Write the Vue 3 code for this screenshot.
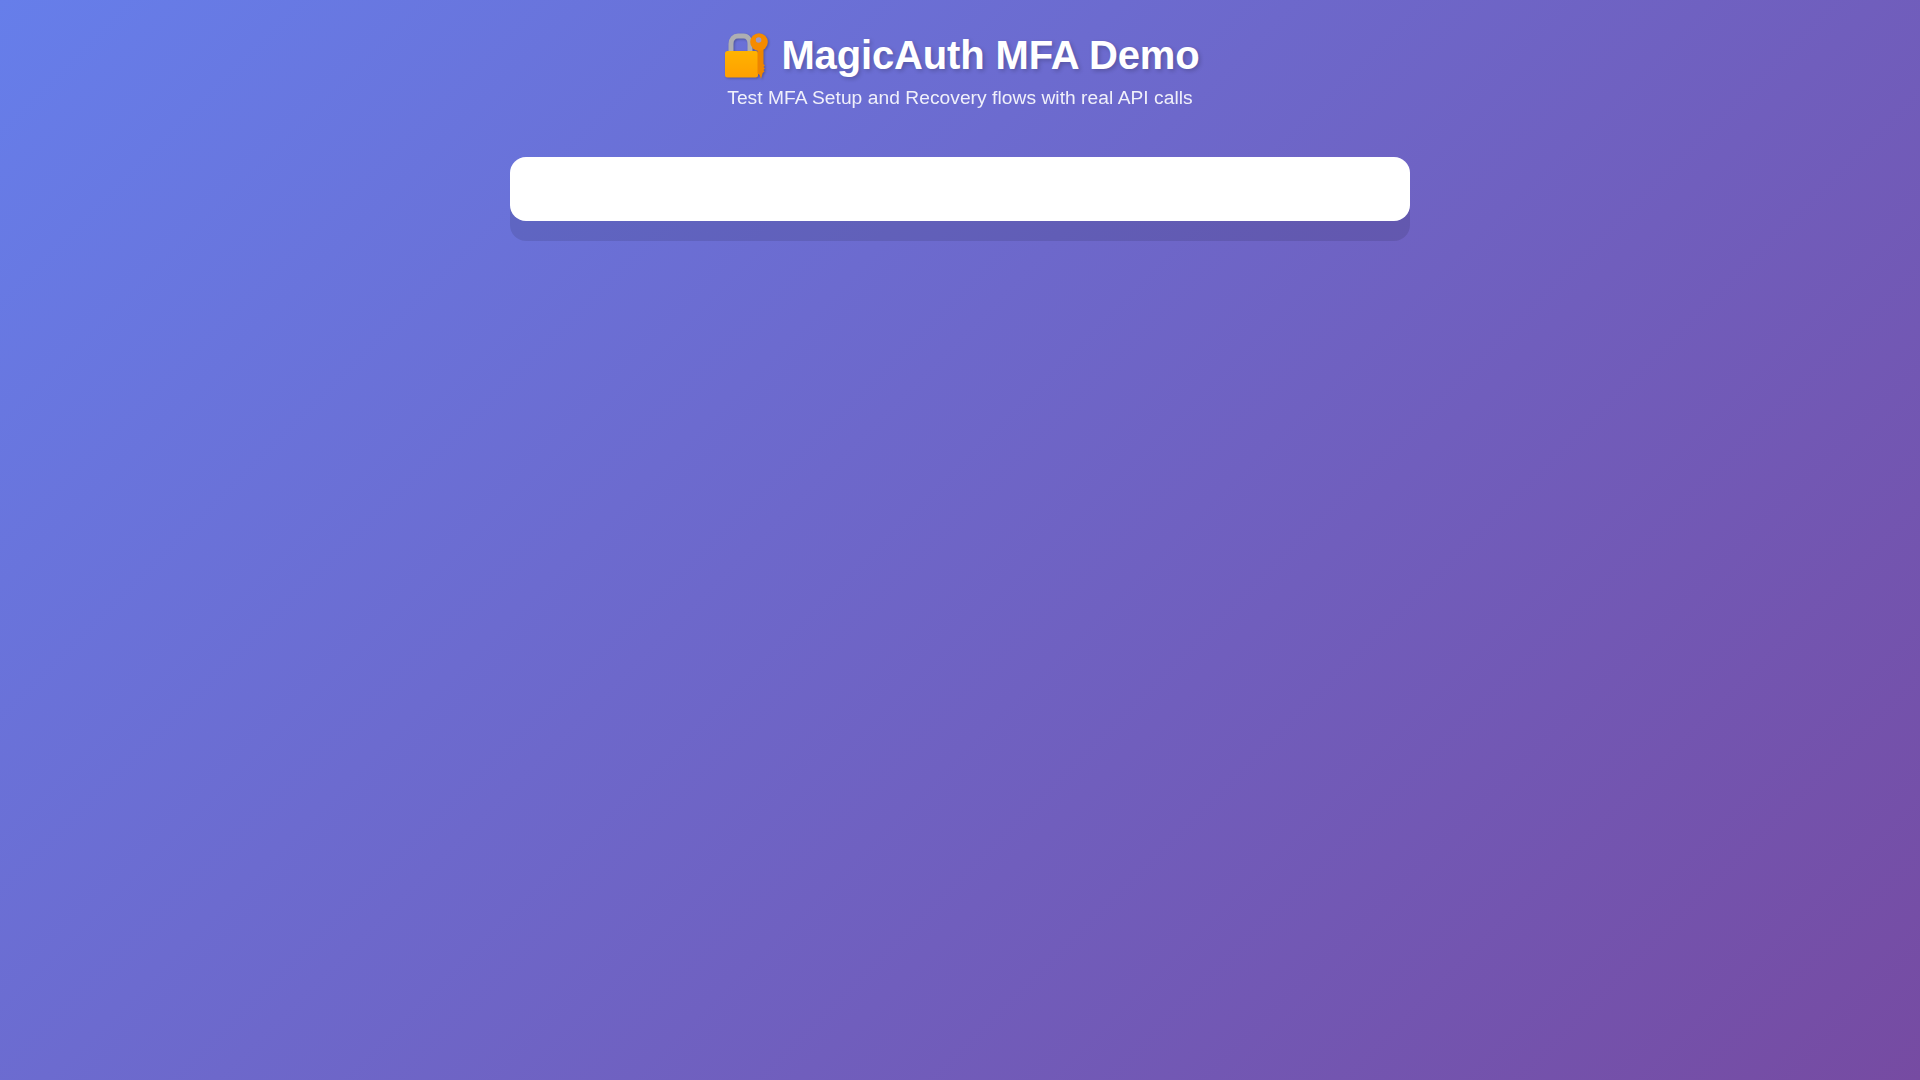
<script setup>
const title = 'MagicAuth MFA Demo'
const subtitle = 'Test MFA Setup and Recovery flows with real API calls'
</script>

<template>
  <div class="page">
    <div class="container">
      <header class="header">
        <h1 class="title">
          <svg class="emoji" viewBox="0 0 50 50" width="50" height="50" aria-hidden="true">
            <defs>
              <linearGradient id="lockFill" x1="0" y1="0" x2="0" y2="1">
                <stop offset="0" stop-color="#ffb300" />
                <stop offset="1" stop-color="#ffa000" />
              </linearGradient>
            </defs>
            <path d="M11 21V12C11 7 14 4 18 4h5.500c4 0 6.500 3 6.500 8v9" fill="none" stroke="#aeaeb2" stroke-width="5" />
            <rect x="5" y="19" width="33" height="26.500" rx="2.500" fill="url(#lockFill)" />
            <path d="M37.500 14h6V32l1.400 1.500-1.400 1.500 1.400 1.500-1.400 1.500 1 1.500-1.800 1.500-1.700 6-1.300-4-2.200-1.500z" fill="#ee8500" />
            <circle cx="39" cy="10" r="8.800" fill="#f58b00" />
            <circle cx="38.600" cy="8" r="2.800" fill="#a09ac8" />
          </svg>
          {{ title }}
        </h1>
        <p class="subtitle">{{ subtitle }}</p>
      </header>
      <main class="card"></main>
    </div>
  </div>
</template>

<style scoped>
.page {
  box-sizing: border-box;
  min-height: 1080px;
  padding: 32px 20px 20px;
  background: linear-gradient(135deg, #667eea 0%, #764ba2 100%);
  font-family: "Liberation Sans", Arial, sans-serif;
}
.container {
  width: 900px;
  margin: 0 auto;
}
.header {
  text-align: center;
  color: #fff;
  margin-bottom: 48px;
}
.title {
  margin: 0 0 9px;
  font-size: 40px;
  font-weight: 700;
  line-height: 46px;
  letter-spacing: -0.15px;
  text-shadow: 2px 2px 4px rgba(0, 0, 0, 0.2);
}
.emoji {
  vertical-align: -5px;
  margin-block: -8px;
  filter: drop-shadow(1px 1px 1px rgba(0, 0, 0, 0.25));
}
.subtitle {
  margin: 0;
  font-size: 19.2px;
  line-height: 22px;
  letter-spacing: 0.05px;
  opacity: 0.9;
}
.card {
  height: 64px;
  border-radius: 16px;
  background: #fff;
  box-shadow: 0 20px 0 rgba(0, 0, 0, 0.1);
}
</style>

<style>
html, body { margin: 0; }
</style>
